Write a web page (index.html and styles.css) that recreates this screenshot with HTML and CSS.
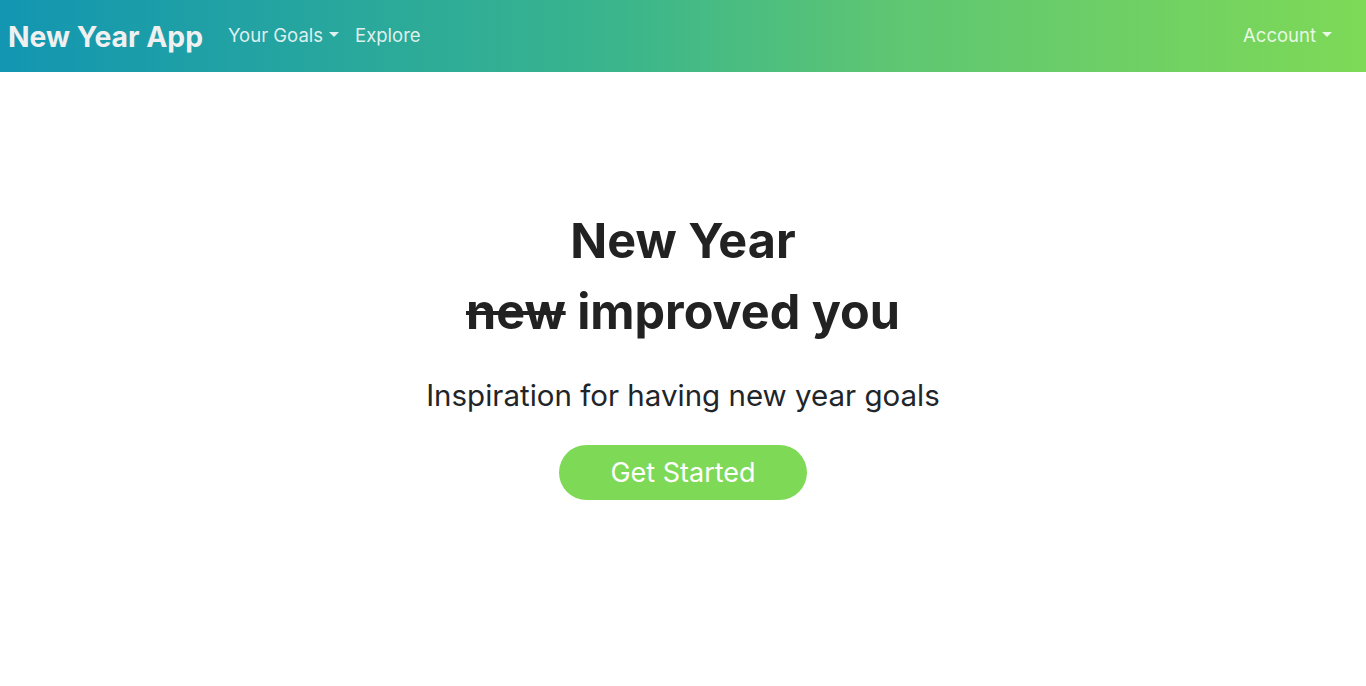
FILE: index.html
```html
<!DOCTYPE html>
<html>
<head>
<meta charset="utf-8">
<link rel="stylesheet" href="styles.css">
</head>
<body>
<nav class="navbar">
  <a class="brand" href="#">New Year App</a>
  <ul class="nav">
    <li class="nav-item"><a href="#" class="dropdown">Your Goals</a></li>
    <li class="nav-item"><a href="#">Explore</a></li>
  </ul>
  <ul class="nav nav-right">
    <li class="nav-item"><a href="#" class="dropdown">Account</a></li>
  </ul>
</nav>
<main class="hero">
  <h1 class="title">New Year<br><s>new</s> improved you</h1>
  <p class="lead">Inspiration for having new year goals</p>
  <a href="#" class="btn">Get Started</a>
</main>
</body>
</html>
```
FILE: styles.css
```css
* { box-sizing: border-box; }
html, body { margin: 0; padding: 0; }
body {
  font-family: Inter, "Noto Sans", sans-serif;
  color: #212529;
  background: #fff;
}
a { text-decoration: none; }
.navbar {
  height: 72px;
  display: flex;
  align-items: center;
  padding: 0 34px 0 8px;
  background: linear-gradient(90deg, #1296b2 0%, #3ab58c 45%, #5ec673 65%, #7ed957 100%);
}
.brand {
  font-size: 28.3px;
  font-weight: 700;
  color: #f0f0f0;
  margin-right: 25px;
  transform: translateY(1px);
}
.nav {
  display: flex;
  list-style: none;
  margin: 0;
  padding: 0;
  gap: 16px;
}
.nav-right { margin-left: auto; }
.nav-item a {
  color: rgba(255,255,255,0.85);
  font-size: 18.5px;
  display: flex;
  align-items: center;
  transform: translateY(-1px);
}
.dropdown::after {
  content: "";
  display: inline-block;
  margin-left: 6px;
  border-top: 5.5px solid currentColor;
  border-left: 5.5px solid transparent;
  border-right: 5.5px solid transparent;
  transform: translateY(-1px);
}
.hero {
  display: flex;
  flex-direction: column;
  align-items: center;
  padding-top: 133px;
  text-align: center;
}
.title {
  font-size: 48.5px;
  font-weight: 700;
  line-height: 71px;
  margin: 0;
  color: #222;
}
.title s { text-decoration-thickness: 4px; }
.lead {
  font-size: 29.5px;
  margin: 28px 0 30px;
  line-height: 40px;
}
.btn {
  display: inline-flex;
  align-items: center;
  justify-content: center;
  width: 248px;
  height: 55px;
  border-radius: 28px;
  background: #7ed957;
  color: #fff;
  font-size: 27px;
}
```
